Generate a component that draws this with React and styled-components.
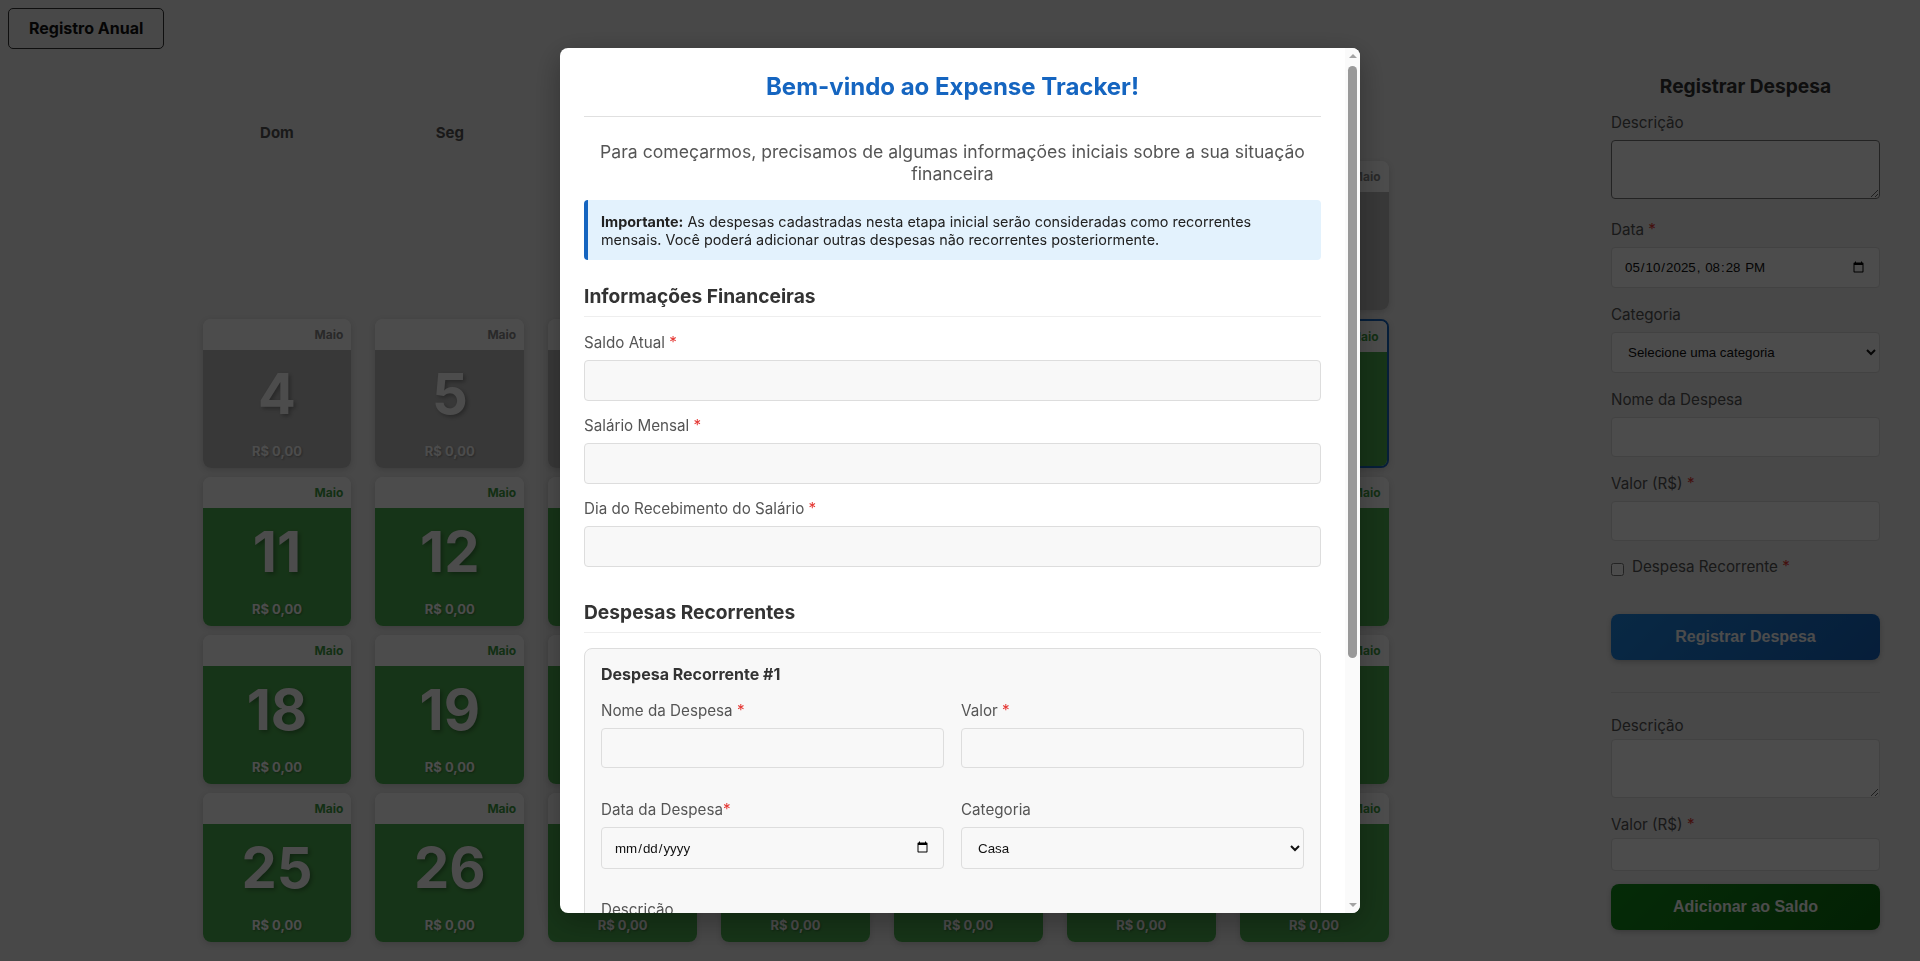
import React from 'react';
import styled, { createGlobalStyle, css } from 'styled-components';

const GlobalStyle = createGlobalStyle`
  *, *::before, *::after { box-sizing: border-box; }
  html, body { margin: 0; padding: 0; }
  body {
    font-family: Inter, "Noto Sans", sans-serif;
    background: #f0f0f0;
    color: #333;
    overflow: hidden;
  }
`;

const Page = styled.div`
  min-height: 100vh;
  display: flex;
  flex-direction: column;
`;

const TopBar = styled.div`
  display: flex;
  padding: 8px 8px 0;
`;

const YearButton = styled.button`
  font-family: Inter, sans-serif;
  font-weight: 700;
  font-size: 16px;
  line-height: 19px;
  padding: 10px 20px;
  border: 1px solid #333;
  border-radius: 5px;
  background: transparent;
  color: #111;
  cursor: pointer;
`;

const Content = styled.div`
  display: flex;
  align-items: flex-start;
`;

const CalendarSection = styled.section`
  flex: 1;
  padding-top: 65px;
`;

const CalendarGrid = styled.div`
  width: 1186px;
  margin: 0 auto;
  display: grid;
  grid-template-columns: repeat(7, 1fr);
  column-gap: 24px;
  row-gap: 9px;
`;

const DayName = styled.div`
  text-align: center;
  font-size: 15px;
  font-weight: 700;
  line-height: 18px;
  padding: 10px 0;
  color: #555;
`;

const EmptyCell = styled.div`
  height: 149px;
`;

const DayCard = styled.div`
  height: 149px;
  border-radius: 8px;
  overflow: hidden;
  background: #fff;
  display: flex;
  flex-direction: column;
  box-shadow: 0 2px 6px rgba(0, 0, 0, 0.15);
  ${(p) =>
    p.$today &&
    css`
      border: 2px solid #1565c0;
    `}
`;

const CardHeader = styled.div`
  height: 31px;
  flex-shrink: 0;
  display: flex;
  align-items: center;
  justify-content: flex-end;
  padding: 0 8px;
  font-size: 12px;
  font-weight: 700;
  color: ${(p) => (p.$past ? '#8a8a8a' : '#3f9f45')};
  background: #fff;
`;

const CardBody = styled.div`
  flex: 1;
  display: flex;
  flex-direction: column;
  align-items: center;
  background: ${(p) => (p.$past ? '#bdbdbd' : '#4caf50')};
`;

const DayNumber = styled.div`
  flex: 1;
  display: flex;
  align-items: center;
  margin-bottom: 5px;
  font-size: 56px;
  font-weight: 700;
  line-height: 1;
  color: #fff;
  text-shadow: 2px 2px 4px rgba(0, 0, 0, 0.3);
`;

const DayAmount = styled.div`
  font-size: 13px;
  font-weight: 700;
  line-height: 17px;
  padding-bottom: 8px;
  color: #fff;
  text-shadow: 1px 1px 2px rgba(0, 0, 0, 0.3);
`;

const Sidebar = styled.aside`
  width: 309px;
  flex-shrink: 0;
  margin-right: 20px;
  padding: 25px 20px 0;
`;

const SideTitle = styled.h2`
  margin: 0 0 15px;
  font-size: 19.2px;
  line-height: 24px;
  font-weight: 700;
  text-align: center;
  color: #333;
`;

const Group = styled.div`
  margin-bottom: ${(p) => p.$mb ?? 16}px;
`;

const Label = styled.label`
  display: block;
  font-size: 15.2px;
  line-height: 19px;
  color: #555;
  margin-bottom: ${(p) => p.$gap ?? 8}px;
`;

const Req = styled.span`
  color: #e53935;
`;

const controlBase = css`
  display: block;
  width: 100%;
  font-family: "Liberation Sans", Arial, sans-serif;
  font-size: 13.33px;
  color: #111;
  border-radius: 4px;
  padding: 0 12px;
`;

const SideTextArea = styled.textarea`
  ${controlBase}
  height: 59px;
  padding: 8px 12px;
  resize: vertical;
  background: #fff;
  border: 1px solid ${(p) => (p.$dark ? '#767676' : '#ddd')};
`;

const SideInput = styled.input`
  ${controlBase}
  height: ${(p) => p.$h ?? 40}px;
  background: #fff;
  border: 1px solid #ddd;
`;

const SideSelect = styled.select`
  ${controlBase}
  height: 41px;
  background: #fff;
  border: 1px solid #ddd;
`;

const CheckRow = styled.label`
  display: flex;
  align-items: flex-end;
  font-size: 15.2px;
  line-height: 19px;
  color: #555;
  margin-bottom: 38px;
  input {
    margin: 0 8px 0 0;
    width: 13px;
    height: 13px;
  }
`;

const ActionButton = styled.button`
  display: block;
  width: 100%;
  height: 46px;
  border: none;
  border-radius: 8px;
  font-family: "Liberation Sans", Arial, sans-serif;
  font-weight: 700;
  font-size: 16px;
  color: #fff;
  cursor: pointer;
  box-shadow: 0 2px 5px rgba(0, 0, 0, 0.2);
  background: ${(p) =>
    p.$variant === 'green'
      ? 'linear-gradient(135deg, #138f1b, #0c6e0f)'
      : 'linear-gradient(135deg, #1e88e5, #1565c0)'};
`;

const Divider = styled.hr`
  border: none;
  border-top: 1px solid #ddd;
  margin: 32px 0 23px;
`;

/* ---------- Modal ---------- */

const Overlay = styled.div`
  position: fixed;
  inset: 0;
  background: rgba(0, 0, 0, 0.7);
  display: flex;
  align-items: center;
  justify-content: center;
  z-index: 1000;
`;

const ModalBox = styled.div`
  width: 800px;
  height: 90vh;
  display: flex;
  background: #fff;
  border-radius: 8px;
  overflow: hidden;
  box-shadow: 0 8px 30px rgba(0, 0, 0, 0.3);
`;

const ModalScroll = styled.div`
  flex: 1;
  min-width: 0;
  max-height: 90vh;
  overflow-y: auto;
  scrollbar-width: none;
  padding: 24px;
  &::-webkit-scrollbar {
    display: none;
  }
`;

const ScrollTrack = styled.div`
  width: 15px;
  flex-shrink: 0;
  display: flex;
  flex-direction: column;
  align-items: center;
  background: #fafafa;
`;

const ScrollArrow = styled.div`
  width: 15px;
  height: 15px;
  flex-shrink: 0;
  display: flex;
  align-items: center;
  justify-content: center;
  margin-top: ${(p) => (p.$down ? 'auto' : '0')};
  &::before {
    content: '';
    border-left: 4px solid transparent;
    border-right: 4px solid transparent;
    ${(p) =>
      p.$down
        ? css`
            border-top: 4px solid #a3a3a3;
          `
        : css`
            border-bottom: 4px solid #a3a3a3;
          `}
  }
`;

const ScrollThumb = styled.div`
  width: 9px;
  height: 592px;
  margin-top: 3px;
  border-radius: 5px;
  background: #999;
`;

const ModalTitle = styled.h2`
  margin: 0 0 24px;
  padding-bottom: 15px;
  border-bottom: 1px solid #e0e0e0;
  font-size: 24px;
  line-height: 29px;
  font-weight: 700;
  text-align: center;
  color: #1565c0;
`;

const Subtitle = styled.p`
  margin: 0 0 16px;
  font-size: 17.6px;
  line-height: 21.6px;
  text-align: center;
  color: #555;
`;

const InfoBox = styled.div`
  margin-bottom: 24px;
  padding: 13px 13px 12px;
  background: #e3f2fd;
  border-left: 4px solid #1565c0;
  border-radius: 4px;
  font-size: 14.4px;
  line-height: 17.4px;
  color: #222;
  strong {
    font-weight: 700;
  }
`;

const SectionTitle = styled.h3`
  margin: 0 0 ${(p) => p.$mb ?? 16}px;
  padding-bottom: 8px;
  border-bottom: 1px solid #eee;
  font-size: 19.2px;
  line-height: 24px;
  font-weight: 700;
  color: #333;
`;

const Section = styled.div`
  margin-bottom: ${(p) => p.$mb ?? 0}px;
`;

const ModalInput = styled.input`
  ${controlBase}
  height: ${(p) => p.$h ?? 41}px;
  background: #f8f8f8;
  border: 1px solid #ddd;
`;

const ModalSelect = styled.select`
  ${controlBase}
  height: 42px;
  background: #f8f8f8;
  border: 1px solid #ddd;
`;

const ModalTextArea = styled.textarea`
  ${controlBase}
  height: 80px;
  padding: 8px 12px;
  resize: vertical;
  background: #f8f8f8;
  border: 1px solid #ddd;
`;

const ExpenseCard = styled.div`
  background: #f8f8f8;
  border: 1px solid #ddd;
  border-radius: 8px;
  padding: 16px;
`;

const ExpenseTitle = styled.h4`
  margin: 0 0 17px;
  font-size: 16px;
  line-height: 19px;
  font-weight: 700;
  color: #333;
`;

const TwoCols = styled.div`
  display: grid;
  grid-template-columns: 1fr 1fr;
  column-gap: 17px;
`;

const RemoveButton = styled.button`
  height: 36px;
  padding: 0 16px;
  border: 1px solid #e53935;
  border-radius: 4px;
  background: #fff;
  color: #e53935;
  font-family: Inter, sans-serif;
  font-size: 14px;
  font-weight: 600;
`;

const AddButton = styled.button`
  display: block;
  width: 100%;
  height: 44px;
  margin-top: 16px;
  border: 1px dashed #1565c0;
  border-radius: 6px;
  background: #fff;
  color: #1565c0;
  font-family: Inter, sans-serif;
  font-size: 15px;
  font-weight: 600;
`;

const ModalFooter = styled.div`
  margin-top: 30px;
  padding-top: 24px;
  border-top: 1px solid #eee;
  display: flex;
  justify-content: flex-end;
`;

const SubmitButton = styled.button`
  height: 46px;
  padding: 0 28px;
  border: none;
  border-radius: 6px;
  background: #1565c0;
  color: #fff;
  font-family: Inter, sans-serif;
  font-size: 16px;
  font-weight: 700;
`;

const DAY_NAMES = ['Dom', 'Seg', 'Ter', 'Qua', 'Qui', 'Sex', 'Sáb'];
const TODAY = 10;

function Calendar() {
  const cells = [];
  for (let i = 0; i < 4; i++) cells.push(null);
  for (let d = 1; d <= 31; d++) cells.push(d);
  return (
    <CalendarGrid>
      {DAY_NAMES.map((n) => (
        <DayName key={n}>{n}</DayName>
      ))}
      {cells.map((d, i) =>
        d === null ? (
          <EmptyCell key={`e${i}`} />
        ) : (
          <DayCard key={d} $today={d === TODAY}>
            <CardHeader $past={d < TODAY}>Maio</CardHeader>
            <CardBody $past={d < TODAY}>
              <DayNumber>{d}</DayNumber>
              <DayAmount>R$ 0,00</DayAmount>
            </CardBody>
          </DayCard>
        )
      )}
    </CalendarGrid>
  );
}

function ExpenseSidebar() {
  return (
    <Sidebar>
      <SideTitle>Registrar Despesa</SideTitle>
      <Group $mb={21}>
        <Label>Descrição</Label>
        <SideTextArea $dark />
      </Group>
      <Group $mb={17}>
        <Label>
          Data <Req>*</Req>
        </Label>
        <SideInput type="datetime-local" defaultValue="2025-05-10T20:28" $h={41} />
      </Group>
      <Group $mb={17}>
        <Label>Categoria</Label>
        <SideSelect defaultValue="">
          <option value="">Selecione uma categoria</option>
          <option value="casa">Casa</option>
          <option value="alimentacao">Alimentação</option>
          <option value="transporte">Transporte</option>
        </SideSelect>
      </Group>
      <Group $mb={17}>
        <Label>Nome da Despesa</Label>
        <SideInput type="text" />
      </Group>
      <Group $mb={16}>
        <Label>
          Valor (R$) <Req>*</Req>
        </Label>
        <SideInput type="number" />
      </Group>
      <CheckRow>
        <input type="checkbox" />
        <span>
          Despesa Recorrente <Req>*</Req>
        </span>
      </CheckRow>
      <ActionButton>Registrar Despesa</ActionButton>
      <Divider />
      <Group $mb={17}>
        <Label $gap={4}>Descrição</Label>
        <SideTextArea />
      </Group>
      <Group $mb={13}>
        <Label $gap={4}>
          Valor (R$) <Req>*</Req>
        </Label>
        <SideInput type="number" $h={33} />
      </Group>
      <ActionButton $variant="green">Adicionar ao Saldo</ActionButton>
    </Sidebar>
  );
}

function WelcomeModal() {
  return (
    <Overlay>
      <ModalBox>
        <ModalScroll>
          <ModalTitle>Bem-vindo ao Expense Tracker!</ModalTitle>
          <Subtitle>
            Para começarmos, precisamos de algumas informações iniciais sobre a sua situação
            financeira
          </Subtitle>
          <InfoBox>
            <strong>Importante:</strong> As despesas cadastradas nesta etapa inicial serão
            consideradas como recorrentes mensais. Você poderá adicionar outras despesas não
            recorrentes posteriormente.
          </InfoBox>

          <Section $mb={33}>
            <SectionTitle>Informações Financeiras</SectionTitle>
            <Group $mb={15}>
              <Label>
                Saldo Atual <Req>*</Req>
              </Label>
              <ModalInput type="number" />
            </Group>
            <Group $mb={15}>
              <Label>
                Salário Mensal <Req>*</Req>
              </Label>
              <ModalInput type="number" />
            </Group>
            <Group $mb={0}>
              <Label>
                Dia do Recebimento do Salário <Req>*</Req>
              </Label>
              <ModalInput type="number" />
            </Group>
          </Section>

          <Section>
            <SectionTitle $mb={15}>Despesas Recorrentes</SectionTitle>
            <ExpenseCard>
              <ExpenseTitle>Despesa Recorrente #1</ExpenseTitle>
              <TwoCols>
                <Group $mb={32}>
                  <Label>
                    Nome da Despesa <Req>*</Req>
                  </Label>
                  <ModalInput type="text" $h={40} />
                </Group>
                <Group $mb={32}>
                  <Label>
                    Valor <Req>*</Req>
                  </Label>
                  <ModalInput type="number" $h={40} />
                </Group>
                <Group $mb={31}>
                  <Label>
                    Data da Despesa<Req>*</Req>
                  </Label>
                  <ModalInput type="date" $h={42} />
                </Group>
                <Group $mb={31}>
                  <Label>Categoria</Label>
                  <ModalSelect defaultValue="casa">
                    <option value="casa">Casa</option>
                    <option value="alimentacao">Alimentação</option>
                    <option value="transporte">Transporte</option>
                    <option value="lazer">Lazer</option>
                  </ModalSelect>
                </Group>
              </TwoCols>
              <Group $mb={16}>
                <Label>Descrição</Label>
                <ModalTextArea />
              </Group>
              <RemoveButton>Remover</RemoveButton>
            </ExpenseCard>
            <AddButton>+ Adicionar Outra Despesa Recorrente</AddButton>
          </Section>

          <ModalFooter>
            <SubmitButton>Concluir Configuração</SubmitButton>
          </ModalFooter>
        </ModalScroll>
        <ScrollTrack aria-hidden="true">
          <ScrollArrow />
          <ScrollThumb />
          <ScrollArrow $down />
        </ScrollTrack>
      </ModalBox>
    </Overlay>
  );
}

export default function App() {
  return (
    <>
      <GlobalStyle />
      <Page>
        <TopBar>
          <YearButton>Registro Anual</YearButton>
        </TopBar>
        <Content>
          <CalendarSection>
            <Calendar />
          </CalendarSection>
          <ExpenseSidebar />
        </Content>
      </Page>
      <WelcomeModal />
    </>
  );
}
